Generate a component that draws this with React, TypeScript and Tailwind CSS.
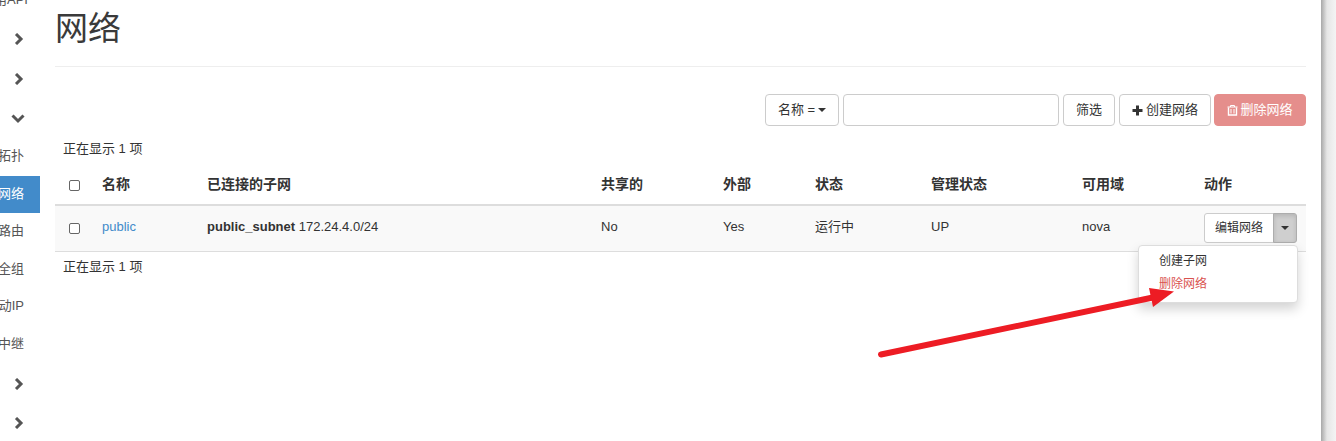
const FONT = "font-['Liberation_Sans','Noto_Sans_CJK_SC',sans-serif]"

// menu items in the side strip, cut off on the left
const sideItems = ['拓扑', '网络', '路由', '全组', '动IP', '中继']

const columns = [
  { label: '名称', width: 'w-[105px]' },
  { label: '已连接的子网', width: 'w-[394px]' },
  { label: '共享的', width: 'w-[122px]' },
  { label: '外部', width: 'w-[92px]' },
  { label: '状态', width: 'w-[116px]' },
  { label: '管理状态', width: 'w-[151px]' },
  { label: '可用域', width: 'w-[122px]' },
  { label: '动作', width: 'w-[110px]' },
]

function Chevron({ down = false }: { down?: boolean }) {
  return (
    <svg width="14" height="12" viewBox="0 0 14 12" className="text-[#555]">
      <path
        d={down ? 'M1.500 2.500 L7 8 L12.500 2.500' : 'M4 1 L9 6 L4 11'}
        fill="none"
        stroke="currentColor"
        strokeWidth="3"
      />
    </svg>
  )
}

function Caret() {
  return <span className="inline-block w-0 h-0 border-x-4 border-x-transparent border-t-4 border-t-[#333]" />
}

function Checkbox() {
  return <span className="block w-[11px] h-[11px] rounded-[2px] border border-[#666] bg-white" />
}

function Sidebar() {
  return (
    <div className="w-[40px] shrink-0 text-[#555] text-[13px] overflow-hidden">
      <div className="h-[20px] -mt-[10px] mb-[9px] whitespace-nowrap -ml-[6px]">用API</div>
      <div className="h-[40px] flex items-center justify-end pr-[14px]"><Chevron /></div>
      <div className="h-[40px] flex items-center justify-end pr-[14px]"><Chevron /></div>
      <div className="h-[39px] flex items-center justify-end pr-[15px]"><Chevron down /></div>
      {sideItems.map((item) => (
        <div
          key={item}
          className={`h-[37.5px] pb-[2px] flex items-center justify-end pr-[16px] whitespace-nowrap ${item === '网络' ? 'bg-[#428bca] text-white' : ''}`}
        >
          {item}
        </div>
      ))}
      <div className="h-[40px] mt-[1px] flex items-center justify-end pr-[14px]"><Chevron /></div>
      <div className="h-[38px] flex items-center justify-end pr-[14px]"><Chevron /></div>
    </div>
  )
}

function Toolbar() {
  const btn = 'h-[32px] rounded-[4px] border border-[#ccc] bg-white flex items-center justify-center text-[13px] text-[#333]'
  return (
    <div className="flex justify-end mt-[27px] h-[32px]">
      <div className={`${btn} w-[74px] gap-[3px]`}>
        名称 = <Caret />
      </div>
      <div className="h-[32px] w-[216px] ml-[4px] rounded-[4px] border border-[#ccc] bg-white" />
      <div className={`${btn} w-[52px] ml-[4px]`}>筛选</div>
      <div className={`${btn} w-[92px] ml-[4px] gap-[3px]`}>
        <svg width="11" height="11" viewBox="0 0 11 11">
          <path d="M4 0.500h3v3.500h3.500v3H7v3.500H4V7H0.500V4H4z" fill="#333" />
        </svg>
        创建网络
      </div>
      <div className={`${btn} w-[92px] ml-[3px] gap-[2px] !border-[#e58e8c] !bg-[#e58e8c] !text-white`}>
        <svg width="11" height="12" viewBox="0 0 11 12" fill="none" stroke="#fff">
          <path d="M0.500 3h10M3.500 3V1.500h4V3" />
          <path d="M1.500 3.500v7.500h8V3.500" strokeWidth="1.400" />
          <path d="M4 5v4.500M7 5v4.500" />
        </svg>
        删除网络
      </div>
    </div>
  )
}

function Table() {
  return (
    <table className="w-full table-fixed text-[13px] text-[#333] border-collapse">
      <thead>
        <tr className="h-[39px] border-b-2 border-[#ddd]">
          <th className="w-[39px] pl-[14px]"><Checkbox /></th>
          {columns.map((col) => (
            <th key={col.label} className={`${col.width} text-left px-[8px] pb-[2px] text-[14px] font-bold`}>
              {col.label}
            </th>
          ))}
        </tr>
      </thead>
      <tbody>
        <tr className="h-[46px] bg-[#f9f9f9] border-b border-[#ddd]">
          <td className="pl-[14px]"><Checkbox /></td>
          <td className="px-[8px] pb-[3px] text-[#428bca]">public</td>
          <td className="px-[8px] pb-[3px]"><strong>public_subnet</strong> 172.24.4.0/24</td>
          <td className="px-[8px] pb-[3px]">No</td>
          <td className="px-[8px] pb-[3px]">Yes</td>
          <td className="px-[8px] pb-[3px]">运行中</td>
          <td className="px-[8px] pb-[3px]">UP</td>
          <td className="px-[8px] pb-[3px]">nova</td>
          <td className="pl-[8px]">
            <div className="flex h-[30px] w-[94px] text-[12px]">
              <div className="w-[70px] rounded-l-[3px] border border-[#ccc] bg-white flex items-center justify-center">编辑网络</div>
              <div className="w-[24px] -ml-px rounded-r-[3px] border border-[#adadad] bg-[#cfcfcf] flex items-center justify-center shadow-[inset_0_2px_4px_rgba(0,0,0,0.125)]">
                <Caret />
              </div>
            </div>
          </td>
        </tr>
      </tbody>
    </table>
  )
}

function Arrow() {
  return (
    <svg className="absolute left-[870px] top-[270px]" width="320" height="100" viewBox="870 270 320 100">
      <path d="M881 354.500 L1160 296" stroke="#ed1c24" strokeWidth="6" strokeLinecap="round" fill="none" />
      <path d="M1149 288 L1174 291.500 L1153 307 Z" fill="#ed1c24" />
    </svg>
  )
}

export default function App() {
  return (
    <div className={`relative w-[1336px] h-[441px] overflow-hidden bg-white flex ${FONT}`}>
      <Sidebar />
      <div className="ml-[15px] w-[1251px] shrink-0">
        <div className="h-[67px] border-b border-[#eee]">
          <h1 className="text-[33px] leading-[58px] text-[#3a3a3a]">网络</h1>
        </div>
        <Toolbar />
        <div className="text-[13px] text-[#333] pl-[8px] mt-[14px] h-[18px] leading-[18px]">正在显示 1 项</div>
        <div className="mt-[8px]">
          <Table />
        </div>
        <div className="text-[13px] text-[#333] pl-[8px] mt-[6px] h-[18px] leading-[18px]">正在显示 1 项</div>
      </div>

      {/* shadow of the page against the grey right edge */}
      <div className="absolute right-0 top-0 bottom-0 w-[15px] bg-gradient-to-r from-[#a8a8a8] via-[#e6e6e6] via-40% to-[#f4f4f4]" />

      {/* dropdown */}
      <div className="absolute left-[1138px] top-[245px] w-[160px] h-[58px] rounded-[4px] bg-white border border-[#ddd] shadow-[0_6px_12px_rgba(0,0,0,0.175)] text-[12px] pt-[5px]">
        <div className="pl-[20px] h-[23px] leading-[20px] text-[#333]">创建子网</div>
        <div className="pl-[20px] h-[23px] leading-[20px] text-[#d9534f]">删除网络</div>
      </div>

      <Arrow />
    </div>
  )
}
